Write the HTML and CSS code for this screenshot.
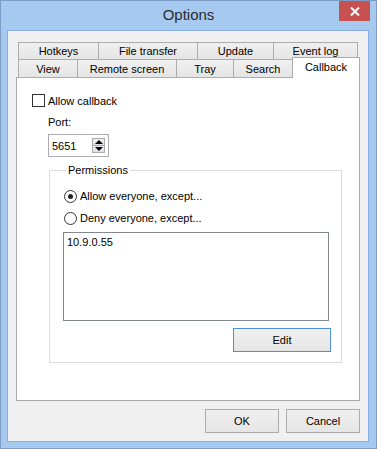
FILE: index.html
```html
<!DOCTYPE html>
<html lang="en">
<head>
  <meta charset="UTF-8" />
  <title>Options</title>
  <link rel="stylesheet" href="styles.css">
</head>
<body>

<div class="window">
  <div class="titlebar">
    <span class="title">Options</span>
    <button class="btn-close" aria-label="Close">
      <svg width="10" height="9" viewBox="0 0 10 9">
        <path d="M1 0.5 L9 8.5 M9 0.5 L1 8.5" stroke="#fff" stroke-width="2" fill="none" />
      </svg>
    </button>
  </div>

  <div class="client">
    <div class="tabs">
      <div class="tabrow tabrow-top">
        <div class="tab w81">Hotkeys</div>
        <div class="tab w100">File transfer</div>
        <div class="tab w77">Update</div>
        <div class="tab w85">Event log</div>
      </div>
      <div class="tabrow tabrow-bottom">
        <div class="tab w60">View</div>
        <div class="tab w100">Remote screen</div>
        <div class="tab w58">Tray</div>
        <div class="tab w60">Search</div>
        <div class="tab tab-active w68">Callback</div>
      </div>
    </div>

    <div class="panel">
      <div class="check-row">
        <span class="checkbox"></span>
        <span>Allow callback</span>
      </div>

      <div class="field-label">Port:</div>
      <div class="spin">
        <span class="spin-value">5651</span>
        <span class="spin-btns">
          <span class="spin-btn"><span class="arrow-up"></span></span>
          <span class="spin-btn"><span class="arrow-down"></span></span>
        </span>
      </div>

      <fieldset class="group">
        <legend>Permissions</legend>
        <div class="radio-row">
          <span class="radio checked"></span>
          <span>Allow everyone, except...</span>
        </div>
        <div class="radio-row">
          <span class="radio"></span>
          <span>Deny everyone, except...</span>
        </div>
        <div class="listbox">10.9.0.55</div>
        <div class="group-actions">
          <button class="btn btn-focus">Edit</button>
        </div>
      </fieldset>
    </div>

    <div class="footer">
      <button class="btn">OK</button>
      <button class="btn">Cancel</button>
    </div>
  </div>
</div>

</body>
</html>
```

FILE: styles.css
```css
body {
  margin: 0;
  font-family: "Liberation Sans", Arial, sans-serif;
  font-size: 11px;
  color: #000;
  background-color: #a6c9f0;
}

.window {
  width: 377px;
  height: 449px;
  box-sizing: border-box;
  border: 1px solid #7c9cc6;
  background-color: #a6c9f0;
  display: flex;
  flex-direction: column;
}

/* title bar */
.titlebar {
  height: 29px;
  display: grid;
  grid-template-columns: 1fr auto 1fr;
}

.title {
  grid-column: 2;
  align-self: center;
  font-size: 15px;
  color: #2b2b2b;
  padding-bottom: 2px;
}

.btn-close {
  grid-column: 3;
  justify-self: end;
  align-self: start;
  width: 31px;
  height: 20px;
  margin-right: 6px;
  padding: 0;
  border: none;
  background-color: #c75050;
  display: flex;
  align-items: center;
  justify-content: center;
}

/* client area */
.client {
  flex: 1;
  margin: 0 7px 6px 6px;
  border: 1px solid #88ade0;
  background-color: #f0f0f0;
  padding: 11px 8px 0 8px;
}

.tabs {
  padding-left: 2px;
}

.tabrow {
  display: flex;
  align-items: flex-end;
}

.tab {
  box-sizing: border-box;
  border: 1px solid #acacac;
  border-bottom: none;
  margin-right: -1px;
  background: linear-gradient(#f0f0f0, #e5e5e5);
  text-align: center;
  white-space: nowrap;
}

.tabrow-top .tab {
  height: 17px;
  line-height: 17px;
}

.tabrow-bottom .tab {
  height: 18px;
  line-height: 19px;
}

.tabrow-bottom .tab-active {
  position: relative;
  z-index: 1;
  height: 21px;
  margin-top: -2px;
  margin-bottom: -1px;
  line-height: 18px;
  background: #fff;
}

.w58 { width: 58px; }
.w60 { width: 60px; }
.w68 { width: 68px; }
.w77 { width: 77px; }
.w81 { width: 81px; }
.w85 { width: 85px; }
.w100 { width: 100px; }

/* tab page */
.panel {
  box-sizing: border-box;
  height: 324px;
  width: 344px;
  border: 1px solid #acacac;
  background-color: #fff;
  padding: 16px 0 0 15px;
}

.check-row {
  display: flex;
  align-items: center;
  gap: 3px;
  height: 13px;
}

.checkbox {
  box-sizing: border-box;
  width: 13px;
  height: 13px;
  border: 1px solid #333;
  background-color: #fff;
}

.field-label {
  margin: 9px 0 0 16px;
  line-height: 13px;
}

.spin {
  box-sizing: border-box;
  width: 61px;
  height: 23px;
  margin: 5px 0 0 16px;
  border: 1px solid #abadb3;
  display: flex;
  align-items: center;
  justify-content: space-between;
  padding: 0 3px 0 3px;
}

.spin-btns {
  display: flex;
  flex-direction: column;
}

.spin-btn {
  box-sizing: border-box;
  width: 13px;
  height: 8px;
  border: 1px solid #acacac;
  background: linear-gradient(#f0f0f0, #e1e1e1);
  display: flex;
  align-items: center;
  justify-content: center;
}

.spin-btn + .spin-btn {
  margin-top: -1px;
}

.arrow-up {
  border-left: 4px solid transparent;
  border-right: 4px solid transparent;
  border-bottom: 4px solid #000;
}

.arrow-down {
  border-left: 4px solid transparent;
  border-right: 4px solid transparent;
  border-top: 4px solid #000;
}

/* group box */
.group {
  width: 293px;
  box-sizing: border-box;
  margin: 7px 0 0 17px;
  padding: 11px 12px 10px 13px;
  border: 1px solid #dcdcdc;
  min-width: 0;
}

.group legend {
  padding: 0 2px;
  margin-left: 3px;
  line-height: 13px;
}

.radio-row {
  display: flex;
  align-items: center;
  gap: 3px;
  height: 16px;
  padding-left: 1px;
}

.radio-row + .radio-row {
  margin-top: 6px;
}

.radio {
  box-sizing: border-box;
  width: 13px;
  height: 13px;
  border: 1px solid #333;
  border-radius: 50%;
  background-color: #fff;
  display: flex;
  align-items: center;
  justify-content: center;
}

.radio.checked::after {
  content: "";
  width: 5px;
  height: 5px;
  border-radius: 50%;
  background-color: #222;
}

.listbox {
  box-sizing: border-box;
  width: 266px;
  height: 89px;
  margin-top: 6px;
  border: 1px solid #828790;
  padding: 3px;
  line-height: 13px;
}

.group-actions {
  display: flex;
  justify-content: flex-end;
  margin: 7px -2px 0 0;
}

/* buttons */
.btn {
  box-sizing: border-box;
  width: 74px;
  height: 24px;
  border: 1px solid #acacac;
  background: linear-gradient(#f0f0f0, #e5e5e5);
  font-family: inherit;
  font-size: 11px;
  color: #000;
  padding: 0;
}

.btn-focus {
  width: 98px;
  border-color: #4d90dd;
}

.footer {
  display: flex;
  justify-content: flex-end;
  gap: 7px;
  margin-top: 8px;
}
```
